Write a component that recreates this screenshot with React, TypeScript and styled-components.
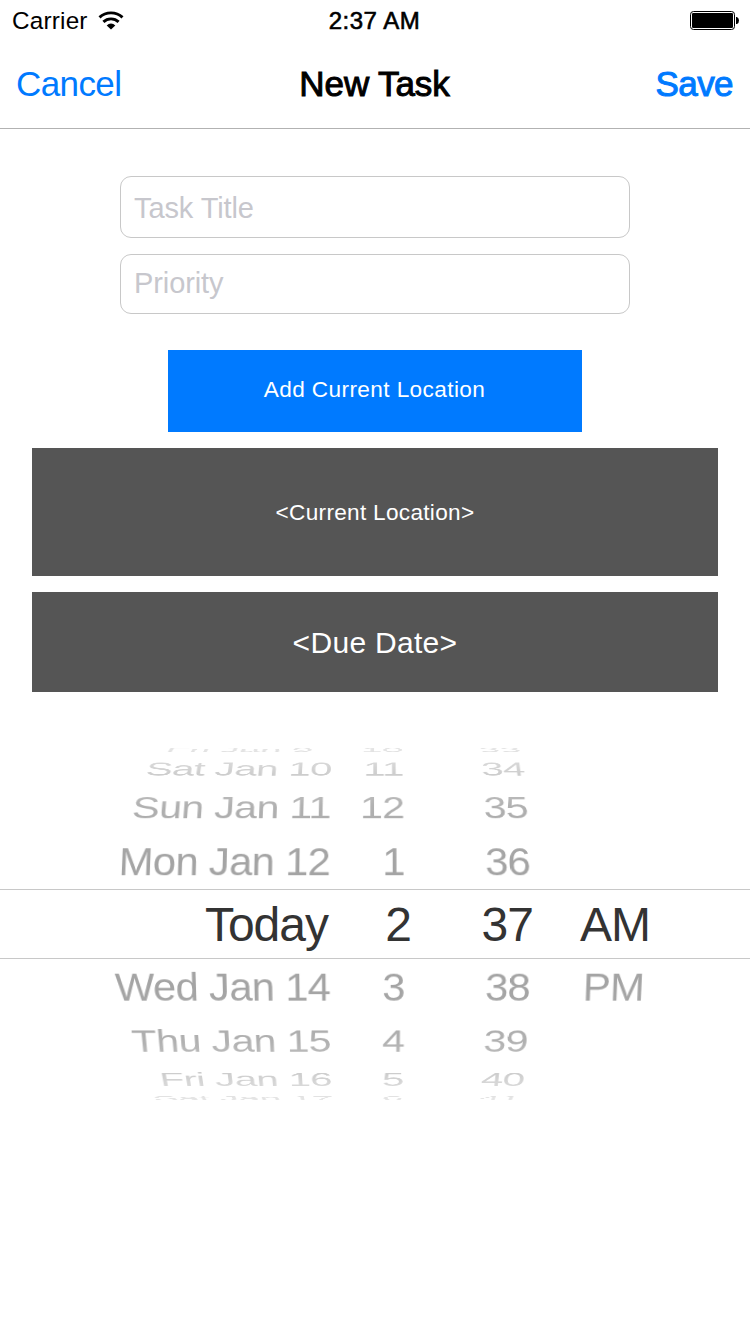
import React from "react";
import styled, { createGlobalStyle, css } from "styled-components";

const GlobalStyle = createGlobalStyle`
  *, *::before, *::after { box-sizing: border-box; }
  body {
    margin: 0;
    background: #fff;
    color: #000;
    font-family: "Liberation Sans", Arial, sans-serif;
  }
  button, input { font: inherit; margin: 0; }
`;

const BLUE = "#007aff";

const Screen = styled.main`
  display: flex;
  flex-direction: column;
  width: 750px;
  height: 1334px;
  overflow: hidden;
  background: #fff;
`;

const StatusBar = styled.div`
  display: grid;
  grid-template-columns: 1fr auto 1fr;
  align-items: center;
  height: 40px;
  padding: 1px 11px 0 12px;
  font-size: 24.3px;
  line-height: 28px;
`;

const Carrier = styled.div`
  display: flex;
  align-items: center;
  gap: 10px;
  letter-spacing: 0.2px;
`;

const Clock = styled.div`
  padding-right: 2px;
  font-size: 24px;
  letter-spacing: 0.5px;
  -webkit-text-stroke: 0.6px #000;
`;

const BatterySlot = styled.div`
  display: flex;
  justify-content: flex-end;
`;

const NavBar = styled.header`
  display: grid;
  grid-template-columns: 1fr auto 1fr;
  align-items: center;
  height: 89px;
  padding: 0 17px 0 16px;
  border-bottom: 1px solid #b2b2b2;
`;

const NavTitle = styled.h1`
  margin: 0;
  font-size: 35px;
  font-weight: 400;
  letter-spacing: -0.1px;
  -webkit-text-stroke: 1px #000;
`;

const NavButton = styled.button<{ $strong?: boolean }>`
  justify-self: ${(p) => (p.$strong ? "end" : "start")};
  padding: 0;
  border: 0;
  background: none;
  color: ${BLUE};
  font-size: 35px;
  letter-spacing: -0.6px;
  ${(p) =>
    p.$strong &&
    css`
      -webkit-text-stroke: 1px ${BLUE};
    `}
`;

const Form = styled.section`
  display: flex;
  flex-direction: column;
  align-items: center;
  padding-top: 47px;
`;

const Field = styled.input<{ $height: number; $drop: number }>`
  width: 510px;
  height: ${(p) => p.$height}px;
  margin-bottom: 16px;
  padding: ${(p) => `${p.$drop}px 13px ${2 - p.$drop}px`};
  border: 1px solid #c8c8c8;
  border-radius: 11px;
  background: #fff;
  font-size: 29px;
  letter-spacing: -0.1px;
  outline: none;
  &::placeholder {
    color: #c7c7cd;
    opacity: 1;
  }
`;

const AddButton = styled.button`
  width: 414px;
  height: 82px;
  margin: 20px 0 16px;
  padding: 0 1px 2px 0;
  border: 0;
  background: ${BLUE};
  color: #fff;
  font-size: 22.6px;
  letter-spacing: 0.4px;
`;

const Panel = styled.div<{ $height: number; $size: number }>`
  display: flex;
  align-items: center;
  justify-content: center;
  width: 686px;
  height: ${(p) => p.$height}px;
  margin-bottom: 16px;
  padding-top: 2px;
  background: #555;
  color: #fff;
  font-size: ${(p) => p.$size}px;
  letter-spacing: 0.3px;
`;

const STEP = 19.2;
const RADIUS = 191.8;

const Picker = styled.section`
  display: grid;
  width: 750px;
  height: 352px;
  margin-top: 40px;
`;

const Wheel = styled.div`
  grid-area: 1 / 1;
  display: grid;
  align-items: center;
  height: 352px;
  overflow: hidden;
  perspective: 2050px;
  perspective-origin: 50% 50%;
  -webkit-mask-image: linear-gradient(
    rgba(0, 0, 0, 0.28) 0,
    rgba(0, 0, 0, 0.5) 22px,
    rgba(0, 0, 0, 0.86) 58px,
    #000 110px,
    #000 242px,
    rgba(0, 0, 0, 0.86) 294px,
    rgba(0, 0, 0, 0.5) 330px,
    rgba(0, 0, 0, 0.28) 352px
  );
`;

const WheelRow = styled.div<{ $step: number }>`
  grid-area: 1 / 1;
  display: grid;
  grid-template-columns: 330px 75px 126px 1fr;
  height: 64px;
  line-height: 65px;
  color: #a4a4a4;
  font-size: 42px;
  letter-spacing: -0.7px;
  white-space: pre;
  transform: translateZ(${-RADIUS}px) rotateX(${(p) => -p.$step * STEP}deg) translateZ(${RADIUS}px);
`;

const SelectedRow = styled.div`
  grid-area: 1 / 1;
  align-self: center;
  display: grid;
  grid-template-columns: 328px 83px 122px 1fr;
  height: 70px;
  line-height: 70px;
  border-top: 1px solid #c8c8c8;
  border-bottom: 1px solid #c8c8c8;
  color: #333;
  font-size: 48px;
  letter-spacing: -1px;
`;

const Cell = styled.span`
  text-align: right;
`;

const Meridiem = styled.span<{ $indent: number }>`
  padding-left: ${(p) => p.$indent}px;
`;

const rows = [
  { step: -4, day: "Fri Jan 9\u00a0\u00a0", hour: "10", minute: "33" },
  { step: -3, day: "Sat Jan 10", hour: "11", minute: "34" },
  { step: -2, day: "Sun Jan 11", hour: "12", minute: "35" },
  { step: -1, day: "Mon Jan 12", hour: "1", minute: "36" },
  { step: 1, day: "Wed Jan 14", hour: "3", minute: "38", meridiem: "PM" },
  { step: 2, day: "Thu Jan 15", hour: "4", minute: "39" },
  { step: 3, day: "Fri Jan 16", hour: "5", minute: "40" },
  { step: 4, day: "Sat Jan 17", hour: "6", minute: "41" },
];

const WifiIcon = () => (
  <svg width="26" height="20" viewBox="0 0 26 20" aria-hidden="true">
    <g fill="none" stroke="#000" strokeWidth="2.9">
      <path d="M1.5 6.4A16.8 16.8 0 0 1 24.5 6.4" />
      <path d="M5.4 10.9A11 11 0 0 1 20.6 10.9" />
    </g>
    <path d="M13 18.6 8.7 14.4A6 6 0 0 1 17.3 14.4Z" fill="#000" />
  </svg>
);

const BatteryIcon = () => (
  <svg width="49" height="19" viewBox="0 0 49 19" aria-hidden="true">
    <rect x="0.5" y="0.5" width="44" height="18" rx="3" fill="none" stroke="#000" />
    <rect x="2" y="2" width="41" height="15" rx="1.2" fill="#000" />
    <path d="M46 6h1q2 1 2 3.5T47 13h-1Z" fill="#000" />
  </svg>
);

export default function App() {
  return (
    <Screen>
      <GlobalStyle />
      <StatusBar>
        <Carrier>
          <span>Carrier</span>
          <WifiIcon />
        </Carrier>
        <Clock>2:37 AM</Clock>
        <BatterySlot>
          <BatteryIcon />
        </BatterySlot>
      </StatusBar>
      <NavBar>
        <NavButton>Cancel</NavButton>
        <NavTitle>New Task</NavTitle>
        <NavButton $strong>Save</NavButton>
      </NavBar>
      <Form>
        <Field $height={62} $drop={2} placeholder="Task Title" />
        <Field $height={60} $drop={0} placeholder="Priority" />
        <AddButton>Add Current Location</AddButton>
        <Panel $height={128} $size={22.6}>{"<Current Location>"}</Panel>
        <Panel $height={100} $size={30}>{"<Due Date>"}</Panel>
      </Form>
      <Picker>
        <Wheel>
          {rows.map((row) => (
            <WheelRow key={row.step} $step={row.step}>
              <Cell>{row.day}</Cell>
              <Cell>{row.hour}</Cell>
              <Cell>{row.minute}</Cell>
              {row.meridiem && <Meridiem $indent={53}>{row.meridiem}</Meridiem>}
            </WheelRow>
          ))}
        </Wheel>
        <SelectedRow>
          <Cell>Today</Cell>
          <Cell>2</Cell>
          <Cell>37</Cell>
          <Meridiem $indent={47}>AM</Meridiem>
        </SelectedRow>
      </Picker>
    </Screen>
  );
}
